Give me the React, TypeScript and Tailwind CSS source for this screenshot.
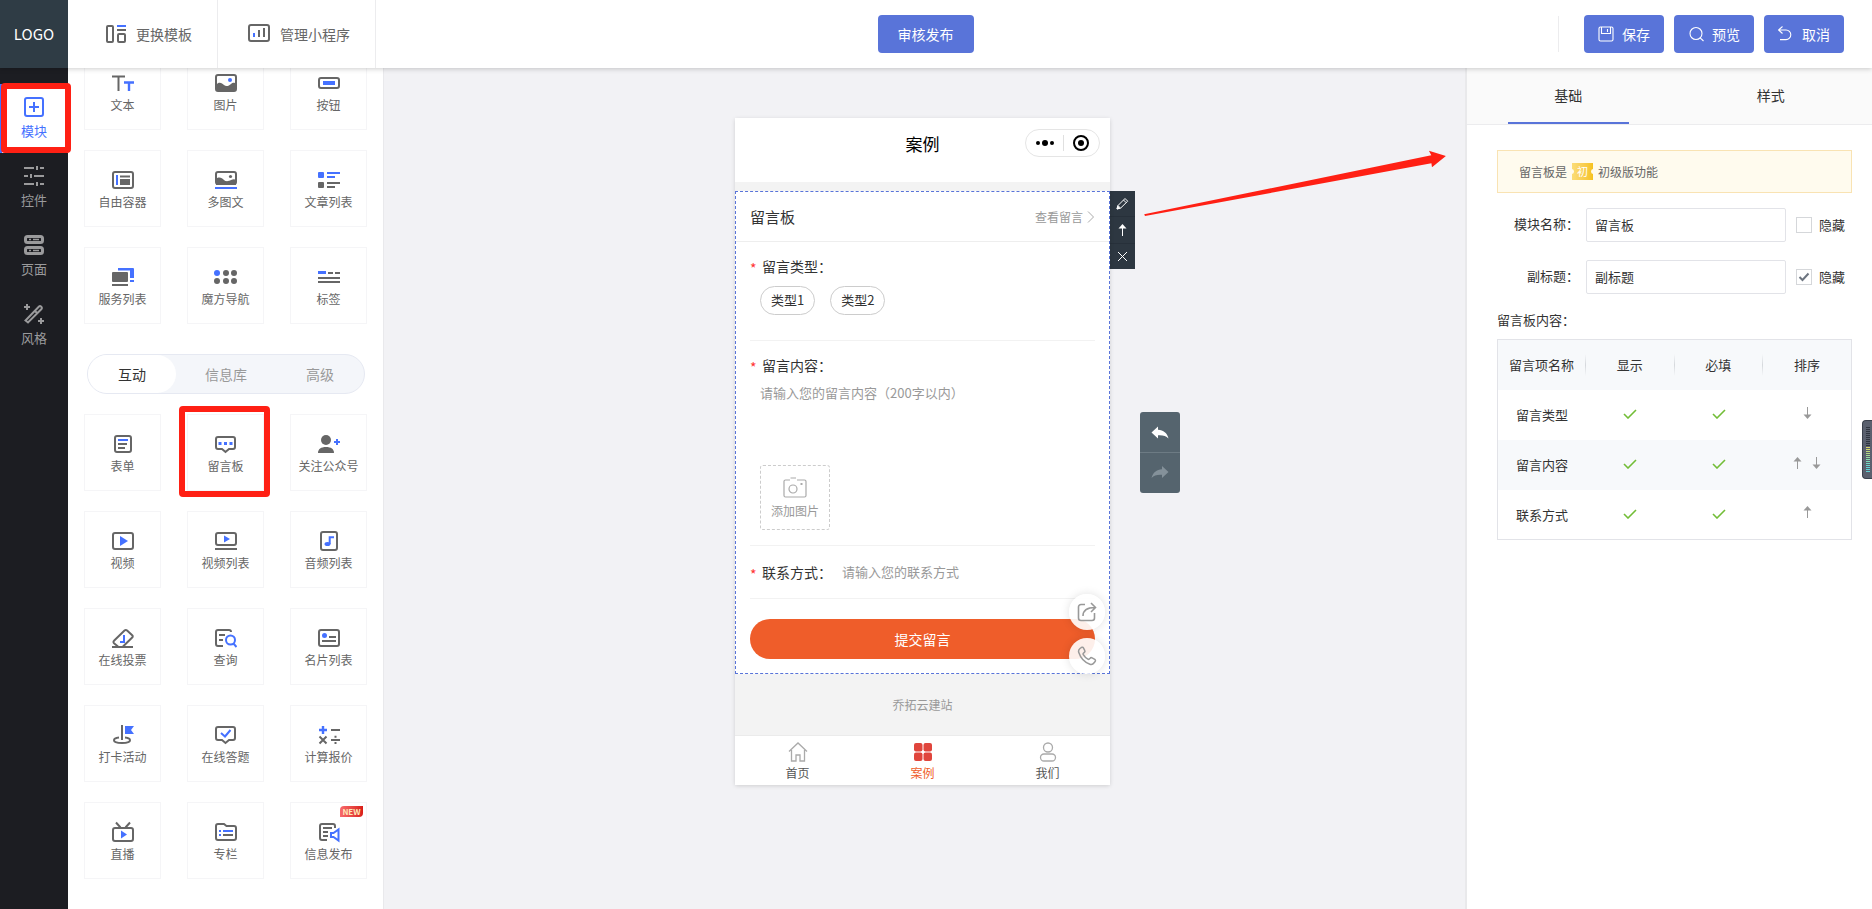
import React, { useState } from 'react';

const DARK = '#666666';
const BLUE = '#4571ff';

interface IconProps {
  children: React.ReactNode;
  w?: number;
  h?: number;
  stroke?: string;
  sw?: number;
  className?: string;
}

const Icon: React.FC<IconProps> = ({ children, w = 23, h = 24, stroke = DARK, sw = 2, className }) => (
  <svg
    width={w}
    height={h}
    viewBox={`0 0 ${w} ${h}`}
    fill="none"
    stroke={stroke}
    strokeWidth={sw}
    className={className}
    aria-hidden="true"
  >
    {children}
  </svg>
);

interface ModuleItem {
  label: string;
  icon: React.ReactNode;
  isNew?: boolean;
  marked?: boolean;
}

const basicModules: ModuleItem[] = [
  {
    label: '文本',
    icon: (
      <>
        <path d="M1 5.5h13M7.5 5v15" />
        <path d="M13 11.5h10M18 11v9" stroke={BLUE} strokeWidth={2.4} />
      </>
    ),
  },
  {
    label: '图片',
    icon: (
      <>
        <rect x="2" y="4" width="20" height="16" rx="2" />
        <path d="M2 14c3-4 6-2 8 0s5 1 7-1 4-1 5 0v6H2z" fill={DARK} stroke="none" />
        <circle cx="16" cy="9" r="2" fill={BLUE} stroke="none" />
      </>
    ),
  },
  {
    label: '按钮',
    icon: (
      <>
        <rect x="2" y="7" width="20" height="10" rx="2" />
        <rect x="6" y="10" width="12" height="4" fill={BLUE} stroke="none" />
      </>
    ),
  },
  {
    label: '自由容器',
    icon: (
      <>
        <rect x="2" y="4" width="20" height="16" rx="2" />
        <path d="M6 7v10" stroke={BLUE} />
        <path d="M9 8.5h10" />
        <rect x="9" y="11" width="10" height="6" fill={DARK} stroke="none" />
      </>
    ),
  },
  {
    label: '多图文',
    icon: (
      <>
        <rect x="2" y="4" width="20" height="12" rx="2" />
        <path d="M2 11c3-3 6-1 8 1s5 1 7 0 4-1 5 0v5H2z" fill={DARK} stroke="none" />
        <circle cx="16.5" cy="8.5" r="1.6" fill={DARK} stroke="none" />
        <path d="M1 20h22" stroke={BLUE} />
      </>
    ),
  },
  {
    label: '文章列表',
    icon: (
      <>
        <rect x="1" y="4" width="6" height="6" rx="1" fill={BLUE} stroke="none" />
        <path d="M10 5h13M10 9h8" stroke={BLUE} />
        <rect x="1" y="14" width="6" height="6" rx="1" fill={DARK} stroke="none" />
        <path d="M10 15h13M10 19h8" />
      </>
    ),
  },
  {
    label: '服务列表',
    icon: (
      <>
        <rect x="1" y="7" width="16" height="10" rx="1" fill={DARK} stroke="none" />
        <path d="M1 20h16" />
        <path d="M7 3h15a1 1 0 0 1 1 1v9h-4V5.500H7zM19 15h4v2h-4z" fill={BLUE} stroke="none" />
      </>
    ),
  },
  {
    label: '魔方导航',
    icon: (
      <g stroke="none" fill={DARK}>
        <circle cx="3" cy="8" r="3" fill={BLUE} />
        <circle cx="12" cy="8" r="3" />
        <circle cx="20" cy="8" r="3" />
        <circle cx="3" cy="16" r="3" />
        <circle cx="12" cy="16" r="3" />
        <circle cx="20" cy="16" r="3" />
      </g>
    ),
  },
  {
    label: '标签',
    icon: (
      <>
        <path d="M1 7.500h8" stroke={BLUE} strokeWidth={3} />
        <path d="M11 8h5M18 8h5M1 13h22M1 17h22" />
      </>
    ),
  },
];

const interactModules: ModuleItem[] = [
  {
    label: '表单',
    icon: (
      <>
        <rect x="4" y="4" width="16" height="16" rx="2" />
        <path d="M7 8h10" stroke={BLUE} />
        <path d="M7 12h9M7 16h7" />
      </>
    ),
  },
  {
    label: '留言板',
    marked: true,
    icon: (
      <>
        <path d="M4 5h15a2 2 0 0 1 2 2v8a2 2 0 0 1-2 2h-4l-3.500 3L8 17H4a2 2 0 0 1-2-2V7a2 2 0 0 1 2-2z" />
        <path d="M4.500 11.500h3M10 11.500h3M15.500 11.500h3" stroke={BLUE} strokeWidth={3} />
      </>
    ),
  },
  {
    label: '关注公众号',
    icon: (
      <>
        <circle cx="9" cy="8" r="5" fill={DARK} stroke="none" />
        <path d="M1 21c0-4 3-6 8-6s8 2 8 6z" fill={DARK} stroke="none" />
        <path d="M17 10h6M20 7v6" stroke={BLUE} />
      </>
    ),
  },
  {
    label: '视频',
    icon: (
      <>
        <rect x="2" y="4" width="20" height="16" rx="2" />
        <path d="M9 7l8 5-8 5z" fill={BLUE} stroke="none" />
      </>
    ),
  },
  {
    label: '视频列表',
    icon: (
      <>
        <rect x="2" y="4" width="20" height="12" rx="2" />
        <path d="M10 6.500l6 3.500-6 3.500z" fill={BLUE} stroke="none" />
        <path d="M1 20h22" />
      </>
    ),
  },
  {
    label: '音频列表',
    icon: (
      <>
        <rect x="4" y="3" width="16" height="18" rx="2" />
        <ellipse cx="10.500" cy="15" rx="3" ry="2" fill={BLUE} stroke="none" />
        <path d="M12.700 15V8.200H17" stroke={BLUE} />
      </>
    ),
  },
  {
    label: '在线投票',
    icon: (
      <>
        <path d="M7 20.500l-4-3.300a1.600 1.600 0 0 1 0-2.400L13.500 4.500a2 2 0 0 1 2.600 0l5.100 4.700a1.600 1.600 0 0 1 0 2.400L12 20.500" />
        <path d="M1 21h21" />
        <path d="M13 9v7H9" stroke={BLUE} />
      </>
    ),
  },
  {
    label: '查询',
    icon: (
      <>
        <path d="M9 20H4a2 2 0 0 1-2-2V6a2 2 0 0 1 2-2h11a2 2 0 0 1 2 2M5 9h6M5 14h4" />
        <circle cx="16.500" cy="14" r="4.500" stroke={BLUE} />
        <path d="M19.500 17.500l3 3.500" stroke={BLUE} />
      </>
    ),
  },
  {
    label: '名片列表',
    icon: (
      <>
        <rect x="2" y="4" width="20" height="16" rx="2" />
        <circle cx="7.500" cy="9.500" r="2.500" fill={BLUE} stroke="none" />
        <path d="M12 11h7M5 15h14" />
      </>
    ),
  },
  {
    label: '打卡活动',
    icon: (
      <>
        <path d="M11 2v15M8 14.500c-3 .3-5 1.200-5 2.700 0 1.700 3.500 2.800 8 2.800s8-1.100 8-2.800c0-1.500-2-2.400-5-2.700" />
        <path d="M14 3h9l-3 4 3 4h-9z" fill={BLUE} stroke="none" />
      </>
    ),
  },
  {
    label: '在线答题',
    icon: (
      <>
        <path d="M4 4h15a2 2 0 0 1 2 2v9a2 2 0 0 1-2 2h-4l-3.500 3L8 17H4a2 2 0 0 1-2-2V6a2 2 0 0 1 2-2z" />
        <path d="M7 10l4 3.500L16.500 7" stroke={BLUE} />
      </>
    ),
  },
  {
    label: '计算报价',
    icon: (
      <>
        <path d="M2 7h8M6 3v8" stroke={BLUE} strokeWidth={2.400} />
        <path d="M14 7h9M14 17h9M18.500 12.800v2M18.500 19v2M2.500 13.500l7 7M9.500 13.500l-7 7" />
      </>
    ),
  },
  {
    label: '直播',
    icon: (
      <>
        <rect x="2" y="8" width="20" height="13" rx="2" />
        <path d="M5 2.500L9.500 7.500M19 2.500L14.500 7.500" />
        <path d="M10 10.500l6 4-6 4z" fill={BLUE} stroke="none" />
      </>
    ),
  },
  {
    label: '专栏',
    icon: (
      <>
        <path d="M4 4h6l2.500 2H20a2 2 0 0 1 2 2v10a2 2 0 0 1-2 2H4a2 2 0 0 1-2-2V6a2 2 0 0 1 2-2z" />
        <path d="M5 11h2M9 11h10M5 15h2" stroke={BLUE} />
        <path d="M9 15h10" />
      </>
    ),
  },
  {
    label: '信息发布',
    isNew: true,
    icon: (
      <>
        <path d="M10 20H5a2 2 0 0 1-2-2V6a2 2 0 0 1 2-2h11a2 2 0 0 1 2 2v2M6 8h9M6 12h5M6 16h5" />
        <path d="M14 13h2.500l5-3.500v11l-5-3.500H14z" stroke={BLUE} />
      </>
    ),
  },
];

const navItems = [
  {
    label: '模块',
    icon: (
      <>
        <rect x="1" y="1" width="18" height="18" rx="2" />
        <path d="M5 10h10M10 5v10" />
      </>
    ),
  },
  {
    label: '控件',
    icon: (
      <>
        <path d="M0 2h10M16 2h4M0 10h4M10 10h10M0 18h10M16 18h4" />
        <path d="M13 0v4M7 8v4M13 16v4" />
      </>
    ),
  },
  {
    label: '页面',
    icon: (
      <>
        <rect x="1.500" y="1.500" width="17" height="6" rx="2" strokeWidth={3} />
        <rect x="1.500" y="12.500" width="17" height="6" rx="2" strokeWidth={3} />
        <path d="M5 4.500h2M9 4.500h6M5 15.500h2M9 15.500h6" strokeWidth={1.500} />
      </>
    ),
  },
  {
    label: '风格',
    icon: (
      <>
        <path d="M1.500 16.500L15 2.500a1.500 1.500 0 0 1 2 0l.500.500a1.500 1.500 0 0 1 0 2L4 18.500zM11 7l2.500 2.500" />
        <path d="M3 0v6M0 3h6M17 14v6M14 17h6" />
      </>
    ),
  },
];

const ModuleCard: React.FC<{ item: ModuleItem }> = ({ item }) => (
  <button
    type="button"
    className="relative flex h-[77px] flex-col items-center border border-[#f5f5f7] bg-white pt-[17px] text-xs text-[#666]"
  >
    <Icon className="shrink-0">{item.icon}</Icon>
    <span className="leading-5 whitespace-nowrap">{item.label}</span>
    {item.isNew && (
      <span className="absolute top-[3px] right-[3px] h-[11px] w-[23px] rounded-tl-[4px] rounded-br-[4px] bg-linear-to-r from-[#f8696b] to-[#d91c16] text-center text-[8px] leading-[11px] font-bold text-[#ffe9b8]">
        NEW
      </span>
    )}
    {item.marked && <span className="absolute -inset-[9px] -right-[7px] -bottom-[7px] rounded-[4px] border-6 border-[#ff2014]" />}
  </button>
);

const CheckMark = () => (
  <Icon w={14} h={10} stroke="#72bd37" sw={1.6} className="mx-auto">
    <path d="M1 5l4 4 8-8" />
  </Icon>
);

const SortArrow: React.FC<{ dir: 'up' | 'down' }> = ({ dir }) => (
  <button type="button" aria-label={dir === 'up' ? '上移' : '下移'} className="w-[19px]">
    <Icon w={9} h={12} stroke="#999" sw={1} className="mx-auto">
      {dir === 'up' ? (
        <>
          <path d="M4.500 1v11" />
          <path d="M4.500 0L8.500 4.500h-8z" fill="#999" stroke="none" />
        </>
      ) : (
        <>
          <path d="M4.500 0v11" />
          <path d="M4.500 12L.500 7.500h8z" fill="#999" stroke="none" />
        </>
      )}
    </Icon>
  </button>
);

interface FieldProps {
  id: string;
  label: string;
  value: string;
  hidden: boolean;
}

const Field: React.FC<FieldProps> = ({ id, label, value, hidden }) => (
  <div className="flex items-center">
    <label htmlFor={id} className="w-[82px] pb-[3px] text-right">
      {label}
    </label>
    <input
      id={id}
      type="text"
      defaultValue={value}
      className="ml-[7px] h-[34px] min-w-0 flex-1 rounded-[2px] border border-[#e2e3e8] bg-white px-2 pb-[2px] outline-none"
    />
    <label className="ml-[10px] flex items-center gap-[7px] pr-[7px]">
      <span className="relative h-4 w-4">
        <input
          type="checkbox"
          defaultChecked={hidden}
          className="peer block h-4 w-4 appearance-none border border-[#d5d7da] bg-white"
        />
        <Icon w={16} h={16} stroke="#6d7580" className="pointer-events-none absolute top-0 left-0 hidden peer-checked:block">
          <path d="M3.500 8l3 3L12.500 4.500" />
        </Icon>
      </span>
      隐藏
    </label>
  </div>
);

const rows: { name: string; sort: ('up' | 'down')[] }[] = [
  { name: '留言类型', sort: ['down'] },
  { name: '留言内容', sort: ['up', 'down'] },
  { name: '联系方式', sort: ['up'] },
];

const levelBars = [
  '#2f3540', '#2f3540', '#2f3540', '#2f3540', '#2f3540', '#2f3540', '#2f3540', '#2f3540', '#2f3540', '#2f3540',
  '#d8d46a', '#cfd870', '#bfd97a', '#b0da86', '#a3dc92', '#93dda0', '#86dcac', '#7adbb8', '#70d8c4', '#68d4cc',
  '#62d2d2', '#5fd0d4', '#5fd0d4',
];

const Header = () => (
  <header className="relative z-20 flex h-[68px] bg-white text-sm shadow-[0_1px_5px_rgba(0,0,0,0.2)]">
    <div className="flex w-[68px] items-center justify-center bg-[#2f3c45] text-[15px] text-white">LOGO</div>
    <nav className="flex text-[#666]">
      <a href="#template" className="flex items-center gap-2 border-r border-[#ececee] pr-[25px] pl-9">
        <Icon w={24}>
          <rect x="3" y="4" width="6" height="16" rx="1" />
          <path d="M13 4h9" stroke={BLUE} />
          <path d="M13 8h9" />
          <rect x="14" y="12" width="7" height="8" rx="1" />
        </Icon>
        更换模板
      </a>
      <a href="#manage" className="flex items-center gap-2 border-r border-[#ececee] pr-[25px] pl-[30px]">
        <Icon w={24}>
          <rect x="1" y="3" width="20" height="16" rx="2" />
          <path d="M6 11v4" stroke={BLUE} />
          <path d="M11 8v7M16 6v9" />
        </Icon>
        管理小程序
      </a>
    </nav>
    <div className="flex flex-1 items-center justify-center">
      <button type="button" className="h-[38px] rounded bg-[#5974d9] px-5 pb-[1px] text-white">
        审核发布
      </button>
    </div>
    <div className="flex w-[397px] items-center justify-end gap-[10px] pr-7">
      <span className="mr-[15px] h-9 w-px bg-[#ececee]" />
      <button type="button" className="flex h-[38px] w-20 items-center justify-center gap-2 rounded bg-[#5974d9] text-white">
        <Icon w={16} h={16} stroke="#fff" sw={1.1}>
          <rect x="1" y="1" width="14" height="14" rx="1.500" />
          <path d="M3.500 1v6.500h9V1M9.500 3v3" />
        </Icon>
        保存
      </button>
      <button type="button" className="flex h-[38px] w-20 items-center justify-center gap-2 rounded bg-[#5974d9] text-white">
        <Icon w={16} h={16} stroke="#fff" sw={1.1}>
          <circle cx="8" cy="7.500" r="6" />
          <path d="M12.200 11.800L15.500 15" />
        </Icon>
        预览
      </button>
      <button type="button" className="flex h-[38px] w-20 items-center justify-center gap-2 rounded bg-[#5974d9] text-white">
        <Icon w={16} h={16} stroke="#fff" sw={1.1}>
          <path d="M4.500.500l-4 3.500 4 3.500M.500 4H8a4.800 4.800 0 0 1 0 9.600H2" />
        </Icon>
        取消
      </button>
    </div>
  </header>
);

const SideNav = () => (
  <nav className="relative z-10 w-[68px] shrink-0 bg-[#1c1d22] pt-4 text-[13px]">
    {navItems.map((item, index) => (
      <a
        key={item.label}
        href="#nav"
        className={`relative flex h-[69px] flex-col items-center pt-[13px] ${
          index === 0 ? 'bg-white text-[#4571ff]' : 'text-[#9a9a9c]'
        }`}
      >
        <Icon w={20} h={20} stroke="currentColor">
          {item.icon}
        </Icon>
        <span className="mt-1 leading-5">{item.label}</span>
        {index === 0 && (
          <>
            <span className="absolute inset-y-0 left-0 w-[2px] bg-[#4571ff]" />
            <span className="absolute -top-[1px] -right-[3px] bottom-0 left-[1px] rounded-[4px] border-6 border-[#ff2014]" />
          </>
        )}
      </a>
    ))}
  </nav>
);

const ModulePanel = () => {
  const [tab, setTab] = useState('互动');

  return (
    <aside className="w-[316px] shrink-0 border-r border-[#e9e9ec] bg-white px-4">
      {/* list is scrolled a little under the header */}
      <div className="-mt-[15px] grid grid-cols-3 gap-x-[26px] gap-y-5">
        {basicModules.map(item => (
          <ModuleCard key={item.label} item={item} />
        ))}
      </div>
      <div className="mt-[30px] mr-[2px] mb-5 ml-[3px] flex h-10 rounded-full border border-[#e6e9f2] bg-[#f4f6fa] text-sm">
        {['互动', '信息库', '高级'].map((name, index) => (
          <button
            key={name}
            type="button"
            onClick={() => setTab(name)}
            className={`rounded-full ${index === 1 ? 'flex-1' : 'w-[88px]'} ${
              tab === name ? 'bg-white text-[#333]' : 'text-[#999]'
            }`}
          >
            {name}
          </button>
        ))}
      </div>
      <div className="grid grid-cols-3 gap-x-[26px] gap-y-5 pb-[30px]">
        {interactModules.map(item => (
          <ModuleCard key={item.label} item={item} />
        ))}
      </div>
    </aside>
  );
};

const Required = () => <span className="w-3 pt-[2px] text-[#f33]">*</span>;

const MessageBoard = () => (
  <section className="border border-dashed border-[#5974d9] bg-white text-sm text-[#333]">
    <div className="flex h-[50px] items-center justify-between border-b border-[#eee] px-[14px]">
      <h2 className="text-[15px]">留言板</h2>
      <a href="#messages" className="flex items-center gap-1 text-xs text-[#999]">
        查看留言
        <Icon w={8} h={12} stroke="#aaa" sw={1}>
          <path d="M1 .500L6.500 6 1 11.500" />
        </Icon>
      </a>
    </div>
    <div className="px-[14px] pb-[14px]">
      <div className="border-b border-[#f2f2f2] pt-[14px] pb-[25px]">
        <p className="flex h-5 leading-5">
          <Required />
          留言类型：
        </p>
        <div className="mt-[10px] ml-[10px] flex gap-[15px] text-[13px]">
          <button type="button" className="h-[29px] rounded-full border border-[#ccc] px-[10px]">
            类型1
          </button>
          <button type="button" className="h-[29px] rounded-full border border-[#ccc] px-[10px]">
            类型2
          </button>
        </div>
      </div>
      <div className="border-b border-[#f2f2f2] pt-[14px] pb-[15px]">
        <label htmlFor="content" className="flex h-5 leading-5">
          <Required />
          留言内容：
        </label>
        <textarea
          id="content"
          placeholder="请输入您的留言内容（200字以内）"
          className="mt-2 ml-[10px] block h-[72px] w-[320px] resize-none text-[13px] leading-5 outline-none placeholder:text-[#999]"
        />
        <button
          type="button"
          className="mt-[10px] ml-[10px] flex h-[65px] w-[70px] flex-col items-center rounded-[3px] border border-dashed border-[#ccc] pt-[11px] text-xs text-[#999]"
        >
          <Icon w={24} h={21} stroke="#aaa" sw={1.2}>
            <path d="M7 3H2.500a1.500 1.500 0 0 0-1.500 1.500v14A1.500 1.500 0 0 0 2.500 20h19a1.500 1.500 0 0 0 1.500-1.500v-14A1.500 1.500 0 0 0 21.500 3H14M7.500 1h5.500" />
            <circle cx="10" cy="12" r="4" />
            <path d="M17.500 7h2" strokeWidth={2} />
          </Icon>
          <span className="mt-[3px] leading-5">添加图片</span>
        </button>
      </div>
      <div className="flex border-b border-[#f2f2f2] py-4 leading-5">
        <label htmlFor="contact" className="flex h-5">
          <Required />
          联系方式：
        </label>
        <input
          id="contact"
          type="text"
          placeholder="请输入您的联系方式"
          className="ml-[10px] h-5 min-w-0 flex-1 text-[13px] outline-none placeholder:text-[#999]"
        />
      </div>
      <button type="button" className="mt-5 h-10 w-full rounded-full bg-[#ef5d2a] pb-[1px] text-white">
        提交留言
      </button>
    </div>
  </section>
);

const Phone = () => (
  <div className="relative w-[375px] self-start rounded-[2px] bg-[#f3f3f3] shadow-[0_1px_4px_rgba(0,0,0,0.15)]">
    <div className="mb-[9px] grid h-16 grid-cols-3 bg-white">
      <h1 className="col-start-2 pt-[13px] text-center text-[17px] leading-[26px] text-black">案例</h1>
      <div className="mt-[11px] mr-[10px] flex h-7 w-[75px] items-center justify-between justify-self-end rounded-full border border-[#e5e5e5] px-[9px]">
        <Icon w={20} h={8}>
          <g fill="#000" stroke="none">
            <circle cx="3" cy="4" r="2" />
            <circle cx="10" cy="4" r="3" />
            <circle cx="17" cy="4" r="2" />
          </g>
        </Icon>
        <span className="h-4 w-px bg-[#e0e0e0]" />
        <Icon w={18} h={18} stroke="#000">
          <circle cx="9" cy="9" r="7" />
          <circle cx="9" cy="9" r="3" fill="#000" stroke="none" />
        </Icon>
      </div>
    </div>
    <MessageBoard />
    <p className="h-[61px] pt-[21px] text-center text-xs leading-5 text-[#999]">乔拓云建站</p>
    <nav className="grid h-[50px] grid-cols-3 border-t border-[#ebebeb] bg-white text-xs text-[#555]">
      <a href="#home" className="flex flex-col items-center pt-[6px]">
        <Icon w={20} h={20} stroke="#aaa" sw={1.3}>
          <path d="M1 9.500L10 1l9 8.500M3.500 8v11H8v-6h4v6h4.500V8" />
        </Icon>
        <span className="mt-[1px] leading-5">首页</span>
      </a>
      <a href="#case" className="flex flex-col items-center pt-[6px] text-[#ef5d2a]">
        <Icon w={20} h={20}>
          <g fill="#e0453c" stroke="none">
            <rect x="1" y="1" width="8.500" height="8.500" rx="2" />
            <rect x="10.500" y="1" width="8.500" height="8.500" rx="2" />
            <rect x="1" y="10.500" width="8.500" height="8.500" rx="2" />
            <rect x="10.500" y="10.500" width="8.500" height="8.500" rx="2" />
          </g>
        </Icon>
        <span className="mt-[1px] leading-5">案例</span>
      </a>
      <a href="#us" className="flex flex-col items-center pt-[6px]">
        <Icon w={20} h={20} stroke="#aaa" sw={1.3}>
          <circle cx="10" cy="5.500" r="4.500" />
          <rect x="2.500" y="12" width="15" height="7" rx="3.500" />
        </Icon>
        <span className="mt-[1px] leading-5">我们</span>
      </a>
    </nav>

    {/* floating contact buttons */}
    <div className="absolute right-[5px] bottom-[111px] flex flex-col gap-2">
      <button
        type="button"
        aria-label="分享"
        className="flex h-9 w-9 items-center justify-center rounded-full bg-white/90 shadow-[0_0_10px_rgba(0,0,0,0.12)]"
      >
        <Icon w={20} h={20} stroke="#999" sw={1.6}>
          <path d="M8 2.500H4A2.500 2.500 0 0 0 1.500 5v11A2.500 2.500 0 0 0 4 18.500h11a2.500 2.500 0 0 0 2.500-2.500v-5" />
          <path d="M6 14c0-5 3-8.500 12-8.500M14 1l4.500 4.500L14 10" />
        </Icon>
      </button>
      <button
        type="button"
        aria-label="电话"
        className="flex h-9 w-9 items-center justify-center rounded-full bg-white/90 shadow-[0_0_10px_rgba(0,0,0,0.12)]"
      >
        <Icon w={20} h={20} stroke="#999" sw={1.5}>
          <path d="M3 2.500l1.300-1c.8-.5 1.700-.3 2.100.4l1.300 2.500c.4.700.2 1.500-.4 2l-.9.800c-.4.400-.4.900-.1 1.400 1.100 1.900 2.600 3.400 4.600 4.600.5.300 1 .2 1.400-.2l.8-.8c.5-.6 1.300-.7 2-.3l2.700 1.500c.7.500.9 1.400.3 2.100l-1 1.300c-1 1.400-2.600 2-4.200 1.400C7.500 16.300 3.600 12 1.800 6.500 1.300 5 1.700 3.500 3 2.500z" />
        </Icon>
      </button>
    </div>
  </div>
);

const Canvas = () => (
  <main className="relative flex flex-1 justify-center pt-[50px] pb-10 pl-[66px]">
    <Phone />
    <div className="mt-[73px] flex h-[78px] w-[25px] flex-col divide-y divide-[#27303a] bg-[#2d3741]">
      <button type="button" aria-label="编辑" className="flex flex-1 items-center justify-center">
        <Icon w={13} h={13} stroke="#fff" sw={1}>
          <path d="M1 12l1-3.500L9 1.500l2.700 2.700L4.500 11.200zM7.500 3l2.700 2.700M2 8.500l2.500 2.700" />
          <path d="M1 12l.7-2.700L3.500 11z" fill="#fff" />
        </Icon>
      </button>
      <button type="button" aria-label="上移" className="flex flex-1 items-center justify-center">
        <Icon w={9} h={12} stroke="#fff" sw={1}>
          <path d="M4.500 1v11" />
          <path d="M4.500 0L8.500 4.500h-8z" fill="#fff" stroke="none" />
        </Icon>
      </button>
      <button type="button" aria-label="删除" className="flex flex-1 items-center justify-center">
        <Icon w={11} h={11} stroke="#fff" sw={1}>
          <path d="M1 1l9 9M10 1l-9 9" />
        </Icon>
      </button>
    </div>
    <div className="mt-[294px] ml-[5px] flex h-[81px] w-10 flex-col divide-y divide-[#6d7b84] rounded-[3px] bg-[#55646e]">
      <button type="button" aria-label="撤销" className="flex flex-1 items-center justify-center">
        <Icon w={18} h={14}>
          <path d="M.500 7.500L7 1.500v3.300c5.500.300 9 3.200 10.500 8.700C15 11 12 10 7 10.300v3.200z" fill="#fff" stroke="none" />
        </Icon>
      </button>
      <button type="button" aria-label="重做" className="flex flex-1 items-center justify-center">
        <Icon w={18} h={14}>
          <path d="M17.500 6L11 0v3.300C5.500 3.600 2 6.500.500 12 3 9.500 6 8.500 11 8.800V12z" fill="#84919a" stroke="none" />
        </Icon>
      </button>
    </div>
    <Icon w={304} h={70} className="pointer-events-none absolute top-[81px] right-[18px]">
      <path d="M1.200 65.300L288.300 6.300l-2.400-4.600 17 5.300-13.900 11.300-.600-4L2 67z" fill="#ff2014" stroke="none" />
    </Icon>
  </main>
);

const SettingsPanel = () => {
  const [tab, setTab] = useState('基础');

  return (
    <aside className="w-[407px] shrink-0 border-l-2 border-[#e9e9eb] bg-white text-[13px] text-[#333]">
      <div className="flex h-[57px] border-b border-[#ececee] bg-[#fafafa] text-sm">
        {['基础', '样式'].map(name => (
          <button key={name} type="button" onClick={() => setTab(name)} className="flex flex-1 flex-col items-center">
            <span className="flex flex-1 items-center">{name}</span>
            <span className={`h-[2px] w-3/5 ${tab === name ? 'bg-[#5974d9]' : ''}`} />
          </button>
        ))}
      </div>
      <div className="pt-[25px] pr-5 pl-[30px]">
        <p className="flex h-[43px] items-center border border-[#f9e3b3] bg-[#fffbee] pl-[21px] text-xs text-[#666]">
          留言板是
          <span className="relative mx-[5px] h-[17px] w-[21px] overflow-hidden bg-linear-to-r from-[#fbdc77] to-[#f6c21c] text-center text-[11px] leading-[17px] text-white">
            初
            <span className="absolute top-[6px] -left-[3px] h-[5px] w-[5px] rounded-full bg-[#fffbee]" />
            <span className="absolute top-[6px] -right-[3px] h-[5px] w-[5px] rounded-full bg-[#fffbee]" />
          </span>
          初级版功能
        </p>
        <div className="mt-[15px] flex flex-col gap-[18px]">
          <Field id="title" label="模块名称：" value="留言板" hidden={false} />
          <Field id="subtitle" label="副标题：" value="副标题" hidden />
        </div>
        <h3 className="mt-4 leading-5">留言板内容：</h3>
        <table className="mt-[9px] w-full table-fixed border border-[#e2e3e8] text-center">
          <thead className="bg-[#f7f9fb]">
            <tr>
              {['留言项名称', '显示', '必填', '排序'].map((name, index) => (
                <th key={name} className="h-[50px] p-0 font-normal">
                  <div className="flex items-center whitespace-nowrap">
                    <span className="flex-1">{name}</span>
                    {index < 3 && <span className="h-[22px] w-px bg-linear-to-b from-[#f7f9fb] via-[#d5d8dc] to-[#f7f9fb]" />}
                  </div>
                </th>
              ))}
            </tr>
          </thead>
          <tbody>
            {rows.map(row => (
              <tr key={row.name} className="even:bg-[#f7f9fb]">
                <td className="h-[50px] p-0">{row.name}</td>
                <td className="p-0 pb-1">
                  <button type="button" aria-label="显示" className="align-middle">
                    <CheckMark />
                  </button>
                </td>
                <td className="p-0 pb-1">
                  <button type="button" aria-label="必填" className="align-middle">
                    <CheckMark />
                  </button>
                </td>
                <td className="p-0 pb-1">
                  <div className="flex justify-center">
                    {row.sort.map(dir => (
                      <SortArrow key={dir} dir={dir} />
                    ))}
                  </div>
                </td>
              </tr>
            ))}
          </tbody>
        </table>
      </div>
    </aside>
  );
};

const App: React.FC = () => (
  <div className="relative flex min-h-screen flex-col bg-[#f2f2f5] font-['Noto_Sans_CJK_SC',sans-serif]">
    <Header />
    <div className="flex flex-1">
      <SideNav />
      <ModulePanel />
      <Canvas />
      <SettingsPanel />
    </div>
    <div className="absolute top-[420px] right-0 flex h-[59px] w-[10px] flex-col gap-px rounded-l-[4px] border border-r-0 border-[#3a404c] bg-[#5a606e] pt-[6px] pl-[3px]">
      {levelBars.map((color, index) => (
        <span key={index} className="h-px w-1" style={{ backgroundColor: color }} />
      ))}
    </div>
  </div>
);

export default App;
